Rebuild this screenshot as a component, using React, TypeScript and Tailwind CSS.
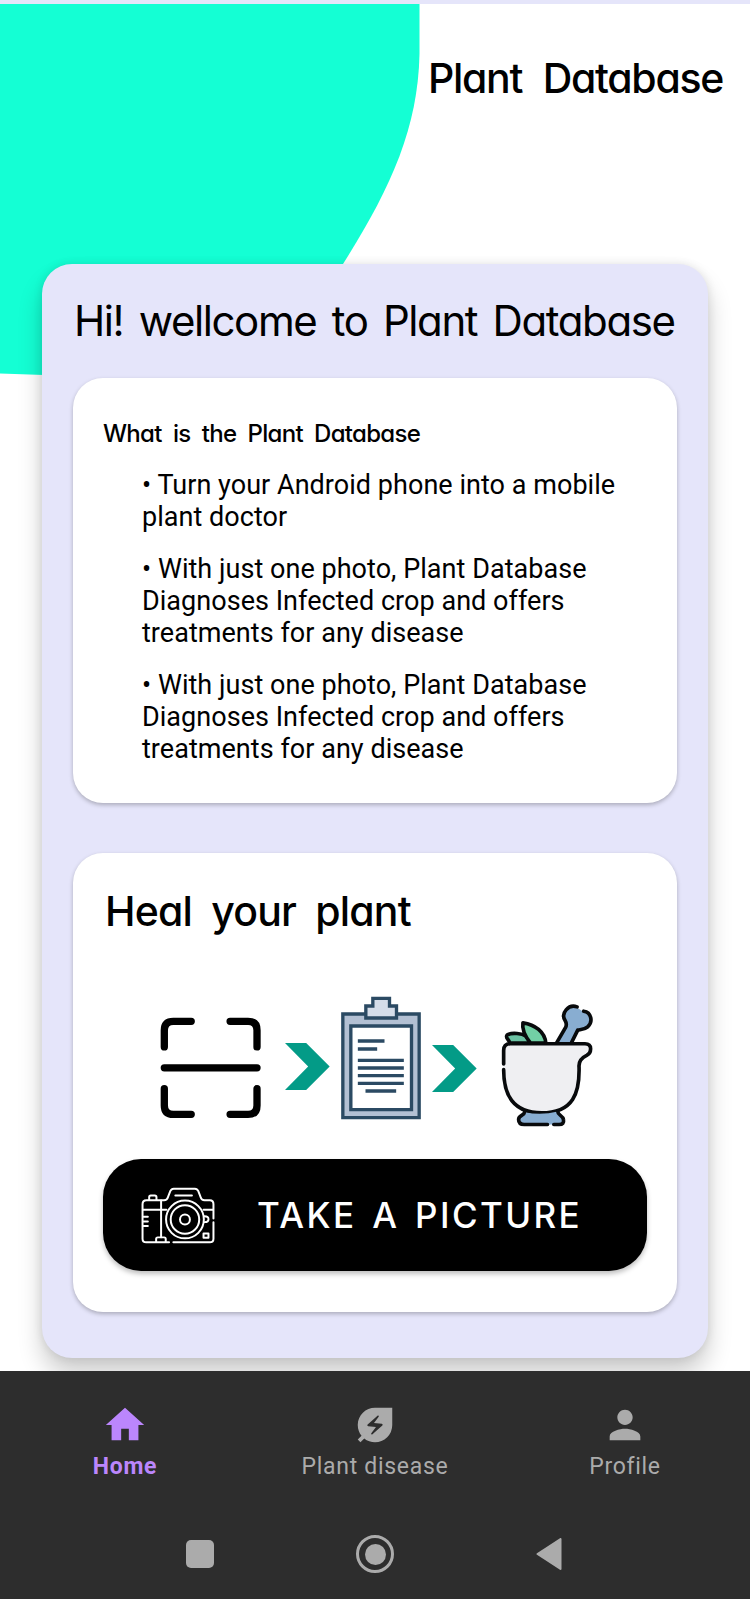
import type { ReactNode } from "react";
import { MdEnergySavingsLeaf, MdHome, MdPerson } from "react-icons/md";

const playful = "font-['Inter',sans-serif] [font-feature-settings:'cv11'] whitespace-nowrap";

function ScanIcon() {
  return (
    <svg className="mt-[26px] ml-[87px] h-[103px] w-[101px] shrink-0" viewBox="60 108 304 308" fill="none" stroke="#000" strokeWidth="22" strokeLinecap="round">
      <path d="M73 200v-50q0-27 27-27h54M271 123h54q27 0 27 27v50M73 326v50q0 27 27 27h54M271 403h54q27 0 27-27v-50M73 263h279" />
    </svg>
  );
}

function Chevron({ className }: { className: string }) {
  return (
    <svg className={className} viewBox="0 0 136 146" fill="#039b87">
      <path d="M0 2h64l71 71-71 71H0l70-71z" />
    </svg>
  );
}

function ClipboardIcon() {
  return (
    <svg className="mt-[5px] ml-[10px] h-[126px] w-[82px] shrink-0" viewBox="30 45 245 378" fill="none" stroke="#2b4a63" strokeWidth="10">
      <path d="M38 102h229v311H38z" fill="#b3c0d3" />
      <path d="M62 138h182v251H62z" fill="#fff" />
      <path d="M107 114V78h21V55h50v23h21v36z" fill="#d5dde9" />
      <path d="M83 183h80M83 207h58M83 241h138M83 264h138M83 287h138M83 310h138M106 333h92" />
    </svg>
  );
}

function MortarIcon() {
  return (
    <svg className="mt-[13px] ml-[23px] h-[125px] w-[93px] shrink-0" viewBox="510 70 280 375" fill="none" stroke="#080a0c" strokeWidth="11" strokeLinecap="round" strokeLinejoin="round">
      <path d="M680 190l28-48q4-10-2-20c-14-22 2-45 28-44l26 17c23 0 32 29 14 46-10 9-20 9-30 10l-20 38z" fill="#88add1" stroke="none" />
      <path d="M680 190l28-48q4-10-2-20c-14-22 10-50 36-41M762 94c23 3 29 32 12 47-10 9-20 8-30 10l-18 36" />
      <path d="M540 190c-4-12-16-17-8-25 15-8 45-4 56 4l14 21z" fill="#6bc2a3" />
      <path d="M602 190c-16-20-27-38-23-61 37 5 66 28 69 61z" fill="#72d0a5" />
      <path d="M521 260v-48q0-20 20-20h225c23 0 20 27 5 35q-25 12-23 35c2 76-16 138-113 138-88 0-116-58-114-136z" fill="#efeff2" stroke="none" />
      <path d="M521 253v-41q0-20 20-20h225c23 0 20 27 5 35q-25 12-23 35c2 76-16 138-113 138-88 0-114-56-114-130" />
      <path d="M584 398c-1 11-18 9-18 22q0 15 17 15h105q16 0 13-15c-2-13-17-12-17-24q-51 12-100 2z" fill="#88add1" stroke="none" />
      <path d="M584 398c-1 11-18 9-18 22q0 15 17 15h70M672 435h16q16 0 13-15c-2-13-17-12-17-24" />
    </svg>
  );
}

function CameraIcon() {
  return (
    <svg className="ml-[38px] h-[57px] w-[74px] shrink-0" viewBox="34 48 222 172" fill="none" stroke="#fff" strokeWidth="6" strokeLinecap="round" strokeLinejoin="round">
      <path d="M118 215H49q-11 0-11-11V100q0-12 12-12h53q9 0 12-10l7-18q3-7 10-7h64q7 0 10 7l7 18q3 10 12 10h16q11 0 11 12v43M252 154v50q0 11-11 11H131" />
      <path d="M58 87v-8q0-5 5-5h12q5 0 5 5v8M137 74h50M94 89v111M40 117h70M222 117h28M41 138h13M41 152h13M41 166h13" />
      <path d="M79 213v-8q0-5 5-5h19q5 0 5 5v8M222 188h15v13h-15zM225 136q12 0 12 9t-12 9" />
      <circle cx="166" cy="146" r="57" />
      <circle cx="166" cy="146" r="43" />
      <circle cx="166" cy="146" r="15" />
    </svg>
  );
}

function Bullet({ children }: { children: ReactNode }) {
  return <li className="mb-5">• {children}</li>;
}

function NavItem({ icon, label, active }: { icon: ReactNode; label: string; active?: boolean }) {
  return (
    <div className={`flex w-[250px] flex-col items-center ${active ? "font-bold text-[#bb86fc]" : "text-[#ababab]"}`}>
      {icon}
      <span className="mt-[3px] text-[23px] leading-8 tracking-[0.7px]">{label}</span>
    </div>
  );
}

export default function App() {
  return (
    <div className="relative flex h-[1599px] w-[750px] flex-col overflow-hidden bg-white text-black">
      <div className="h-1 shrink-0 bg-[#e5e5fa]" />
      <svg className="absolute top-1 left-0 h-[374px] w-[422px]" viewBox="0 4 422 374" fill="#14ffd4">
        <path d="M0 4h419.500v50C418 130 389 191 343 264L250 375H44L0 373.500z" />
      </svg>

      <header className="relative flex h-[260px] shrink-0 justify-end pt-[48px] pr-[27px]">
        <h1 className={`${playful} h-[52px] text-[41px] leading-[52px] font-medium tracking-[-1.3px] [word-spacing:11px]`}>Plant Database</h1>
      </header>

      <main className="relative mx-[42px] h-[1094px] shrink-0 rounded-[30px] bg-[#e5e5fa] px-[31px] shadow-[0_16px_24px_rgba(0,0,0,0.2),0_0_10px_rgba(0,0,0,0.1)]">
        <h2 className={`${playful} h-[114px] pt-[30px] pl-px text-[42px] leading-[54px] font-normal tracking-[-1.4px] [word-spacing:5px]`}>Hi! wellcome to Plant Database</h2>

        <section className="h-[425px] rounded-[30px] bg-white pt-[40px] pl-[30px] shadow-[0_2px_4px_rgba(0,0,0,0.25)]">
          <h3 className={`${playful} text-[24px] leading-8 font-medium tracking-[-0.7px] [word-spacing:5.5px]`}>What is the Plant Database</h3>
          <ul className="mt-[19px] ml-[39px] font-['Roboto',sans-serif] text-[27px] leading-8 tracking-[0.04px] whitespace-nowrap">
            <Bullet>Turn your Android phone into a mobile<br />plant doctor</Bullet>
            <Bullet>With just one photo, Plant Database<br />Diagnoses Infected crop and offers<br />treatments for any disease</Bullet>
            <Bullet>With just one photo, Plant Database<br />Diagnoses Infected crop and offers<br />treatments for any disease</Bullet>
          </ul>
        </section>

        <section className="mt-[50px] h-[459px] rounded-[30px] bg-white pt-[32px] shadow-[0_2px_4px_rgba(0,0,0,0.25)]">
          <h2 className={`${playful} ml-[32px] h-[52px] text-[41px] leading-[52px] font-medium tracking-[-0.8px] [word-spacing:9px]`}>Heal your plant</h2>
          <div className="mt-[53px] flex h-[169px] items-start">
            <ScanIcon />
            <Chevron className="mt-[52px] ml-[24px] h-[49px] w-[45px] shrink-0" />
            <ClipboardIcon />
            <Chevron className="mt-[54px] ml-[10px] h-[49px] w-[45px] shrink-0" />
            <MortarIcon />
          </div>
          <button className="mx-[30px] flex h-[112px] w-[544px] items-center rounded-[38px] bg-black text-white shadow-[0_3px_5px_rgba(0,0,0,0.25)]">
            <CameraIcon />
            <span className={`${playful} ml-[42px] text-[35px] font-medium tracking-[2.4px] [word-spacing:4px]`}>TAKE A PICTURE</span>
          </button>
        </section>
      </main>

      <footer className="relative mt-[13px] flex flex-1 flex-col bg-[#2d2d2d] font-['Roboto',sans-serif]">
        <nav className="flex h-[121px] pt-[31px]">
          <NavItem active label="Home" icon={<MdHome size={46} />} />
          <NavItem label="Plant disease" icon={<MdEnergySavingsLeaf size={46} />} />
          <NavItem label="Profile" icon={<MdPerson size={46} />} />
        </nav>
        <div className="mt-[42px] flex h-10 items-center">
          <div className="ml-[186px] h-7 w-7 rounded-[5px] bg-[#ababab]" />
          <div className="ml-[142px] flex h-[38px] w-[38px] items-center justify-center rounded-full border-[3px] border-[#ababab]">
            <div className="h-[21px] w-[21px] rounded-full bg-[#ababab]" />
          </div>
          <svg className="ml-[142px] h-[32px] w-[26px]" viewBox="0 0 26 32" fill="#ababab" stroke="#ababab" strokeWidth="2" strokeLinejoin="round">
            <path d="M1.500 16L24.500 1v30z" />
          </svg>
        </div>
      </footer>
    </div>
  );
}
